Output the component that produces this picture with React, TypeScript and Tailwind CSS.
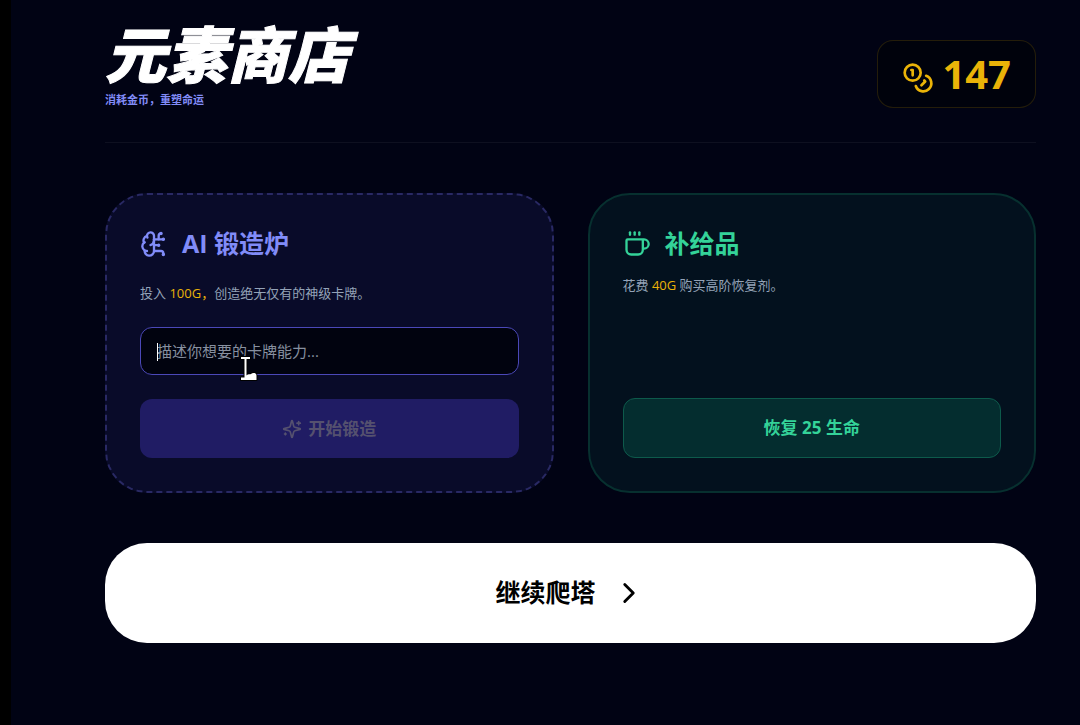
import { BrainCircuit, ChevronRight, Coffee, Coins } from 'lucide-react';

function SparklesIcon() {
  return (
    <svg width="20" height="20" viewBox="0 0 24 24" fill="none" stroke="currentColor" strokeWidth="2" strokeLinecap="round" strokeLinejoin="round" aria-hidden="true">
      <path d="M9.937 15.5A2 2 0 0 0 8.5 14.063l-6.135-1.582a.5.5 0 0 1 0-.962L8.5 9.936A2 2 0 0 0 9.937 8.5l1.582-6.135a.5.5 0 0 1 .963 0L14.063 8.5A2 2 0 0 0 15.5 9.937l6.135 1.581a.5.5 0 0 1 0 .964L15.5 14.063a2 2 0 0 0-1.437 1.437l-1.582 6.135a.5.5 0 0 1-.963 0z" />
      <path d="M20 3v4M22 5h-4M4 17v2M5 18H3" />
    </svg>
  );
}

function Pointer() {
  return (
    <svg className="absolute left-[98px] top-7 pointer-events-none" width="22" height="28" viewBox="0 0 22 28" aria-hidden="true">
      <path
        d="M3 2h9v2H8.500v16.500c1.500-2 3-1 4.500-1.500 1-1 3-1.300 4.500-.5.900.6 1 1.500 1 2.500v4H3v-2.500h3.500V4H3z"
        fill="#fff"
        stroke="#000"
        strokeWidth="2"
        strokeLinejoin="round"
        paintOrder="stroke"
      />
    </svg>
  );
}

export default function App() {
  return (
    <div className="min-h-screen bg-[#010314] border-l-[11px] border-black pl-[94px] pr-11 pt-6 pb-12 text-white font-['Open_Sans','Noto_Sans_CJK_SC',sans-serif]">
      <header className="flex items-end justify-between pb-[34px] border-b border-white/5">
        <div>
          <h1 className="text-[61px] leading-[62px] font-black italic [-webkit-text-stroke:1px_white]">元素商店</h1>
          <p className="mt-1.5 text-[11px] leading-4 font-bold text-[#818cf8]">消耗金币，重塑命运</p>
        </div>
        <div className="flex items-end gap-2 h-[68px] px-6 py-[13px] rounded-2xl bg-[#00020c] border border-yellow-500/15 text-[#eab308]">
          <Coins size={32} />
          <span className="text-[40px] leading-10 font-bold">147</span>
        </div>
      </header>

      <main>
        <div className="grid grid-cols-2 gap-[34px] mt-[50px]">
          <section className="flex flex-col p-[33px] rounded-[42px] border-2 border-dashed border-[#292964] bg-[#090b29]">
            <h2 className="flex items-center gap-3.5 h-[31px] text-[25px] font-bold text-[#818cf8]">
              <BrainCircuit size={28} />
              AI 锻造炉
            </h2>
            <p className="mt-6 text-[13px] leading-5 text-[#94a3b8]">
              投入 <span className="text-[#eab308]">100G，</span>创造绝无仅有的神级卡牌。
            </p>
            <div className="relative mt-6">
              <input
                type="text"
                aria-label="卡牌能力"
                placeholder="描述你想要的卡牌能力..."
                className="block w-full h-12 px-4 rounded-xl border border-[#4b48b8] bg-[#01030f] text-[15px] text-white placeholder:text-[#8790a0] outline-none"
              />
              <span className="absolute left-[17px] top-4 w-px h-[18px] bg-white" />
              <Pointer />
            </div>
            <button className="flex items-center justify-center gap-1.5 mt-6 h-[59px] rounded-xl bg-[#201c64] text-[17px] font-bold text-[#55516f]">
              <SparklesIcon />
              开始锻造
            </button>
          </section>

          <section className="flex flex-col p-[33px] rounded-[42px] border-2 border-[#07302f] bg-[#03111e]">
            <h2 className="flex items-center gap-3.5 h-[31px] text-[25px] font-bold text-[#34d399]">
              <Coffee size={28} />
              补给品
            </h2>
            <p className="mt-4 text-[13px] leading-5 text-[#94a3b8]">
              花费 <span className="text-[#eab308]">40G</span> 购买高阶恢复剂。
            </p>
            <button className="mt-auto h-[60px] rounded-xl border border-[#0d5a4b] bg-[#042d2f] text-[17px] font-bold text-[#34d399]">
              恢复 25 生命
            </button>
          </section>
        </div>

        <button className="flex items-center justify-center gap-4 w-full h-[100px] mt-[50px] rounded-[42px] bg-white text-[25px] font-bold text-black">
          继续爬塔
          <ChevronRight size={34} />
        </button>
      </main>
    </div>
  );
}
